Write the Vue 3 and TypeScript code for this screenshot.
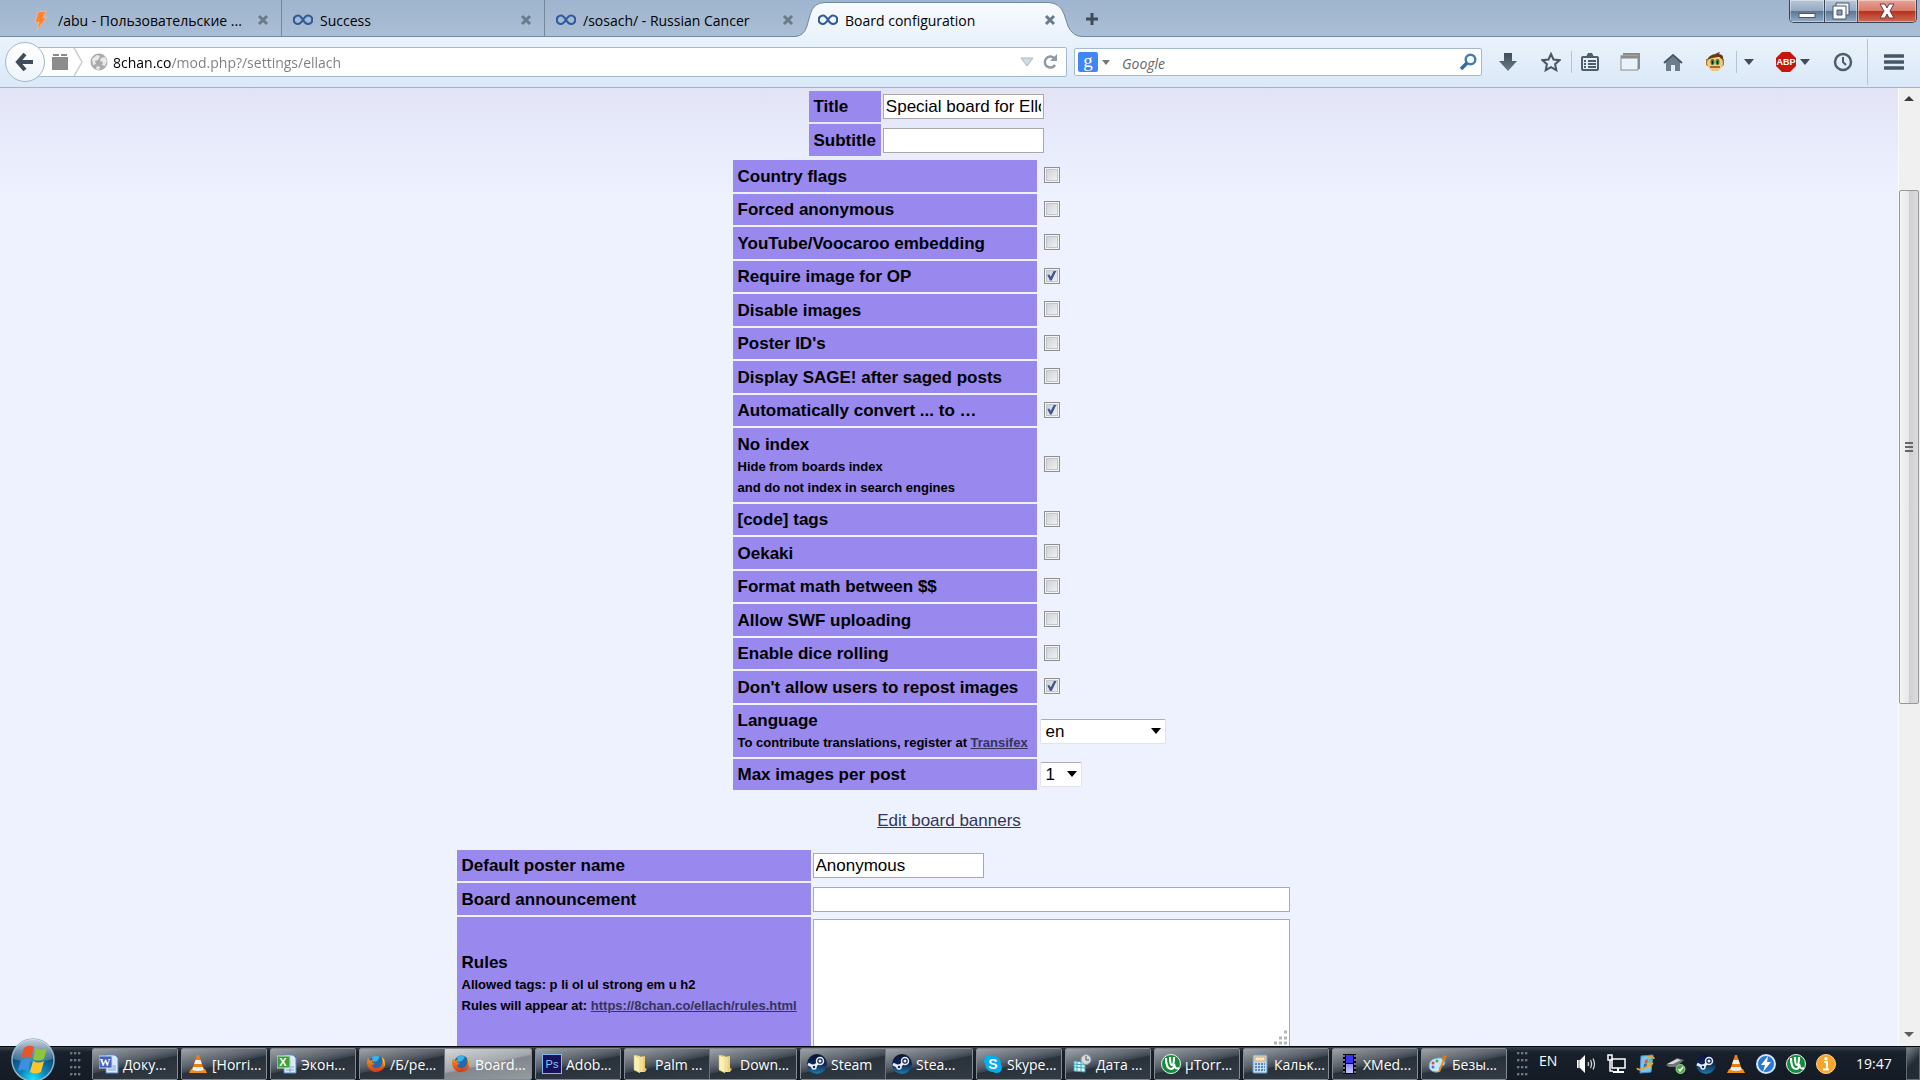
<script setup lang="ts">
import { ref } from 'vue'

interface Tab { title: string; icon: string; kind: string }
interface Option { label: string; checked: boolean; notes?: string[] }
interface Task { label: string; icon: string; active?: boolean }
interface Glyph { text: string; x: number; y: number; size: number; weight: number; family: string; fill: string }

const tabs: Tab[] = [
  { title: '/abu - Пользовательские ...', icon: 'bolt', kind: 'first' },
  { title: 'Success', icon: 'infinity', kind: 'second' },
  { title: '/sosach/ - Russian Cancer', icon: 'infinity', kind: 'third' },
  { title: 'Board configuration', icon: 'infinity', kind: 'active' },
]

const url = ref('8chan.co/mod.php?/settings/ellach')
const title = ref('Special board for Ellochka')
const subtitle = ref('')
const posterName = ref('Anonymous')
const announcement = ref('')
const rules = ref('')
const language = ref('en')
const maxImages = ref('1')

const options = ref<Option[]>([
  { label: 'Country flags', checked: false },
  { label: 'Forced anonymous', checked: false },
  { label: 'YouTube/Voocaroo embedding', checked: false },
  { label: 'Require image for OP', checked: true },
  { label: 'Disable images', checked: false },
  { label: "Poster ID's", checked: false },
  { label: 'Display SAGE! after saged posts', checked: false },
  { label: 'Automatically convert ... to …', checked: true },
  { label: 'No index', checked: false, notes: ['Hide from boards index', 'and do not index in search engines'] },
  { label: '[code] tags', checked: false },
  { label: 'Oekaki', checked: false },
  { label: 'Format math between $$', checked: false },
  { label: 'Allow SWF uploading', checked: false },
  { label: 'Enable dice rolling', checked: false },
  { label: "Don't allow users to repost images", checked: true },
])

const taskGroups: Task[][] = [
  [{ label: 'Доку...', icon: 'word' }],
  [{ label: '[Horri...', icon: 'vlc' }],
  [{ label: 'Экон...', icon: 'excel' }],
  [{ label: '/Б/ре...', icon: 'firefox' }, { label: 'Board...', icon: 'firefox', active: true }],
  [{ label: 'Adob...', icon: 'ps' }],
  [{ label: 'Palm ...', icon: 'folder' }, { label: 'Down...', icon: 'folder' }],
  [{ label: 'Steam', icon: 'steam' }, { label: 'Stea...', icon: 'steam' }],
  [{ label: 'Skype...', icon: 'skype' }],
  [{ label: 'Дата ...', icon: 'date' }],
  [{ label: 'µTorr...', icon: 'utorrent' }],
  [{ label: 'Кальк...', icon: 'calc' }],
  [{ label: 'XMed...', icon: 'film' }],
  [{ label: 'Безы...', icon: 'paint' }],
]

// Letters that sit on top of an application icon.
const glyphs: Record<string, Glyph> = {
  word: { text: 'W', x: 6, y: 12, size: 11, weight: 700, family: 'Liberation Serif', fill: '#fff' },
  excel: { text: 'X', x: 6, y: 12, size: 11, weight: 700, family: 'Liberation Sans', fill: '#fff' },
  ps: { text: 'Ps', x: 10, y: 14, size: 11, weight: 400, family: 'Liberation Sans', fill: '#8cc7ff' },
  skype: { text: 'S', x: 10, y: 15, size: 14, weight: 700, family: 'Liberation Sans', fill: '#fff' },
}

const tray = ['speaker', 'network', 'update', 'usb', 'steam', 'vlc', 'daemon', 'utorrent', 'info']
</script>

<template>
  <div class="desktop">
    <svg class="sprites" aria-hidden="true">
      <defs>
        <radialGradient id="g-orb" cx="50%" cy="95%" r="90%">
          <stop offset="0" stop-color="#1fe0ff" /><stop offset=".35" stop-color="#0b86b8" /><stop offset=".8" stop-color="#0b3f6b" /><stop offset="1" stop-color="#1b4a70" />
        </radialGradient>
        <linearGradient id="g-gloss" x2="0" y2="1"><stop offset="0" stop-color="#fff" stop-opacity=".75" /><stop offset="1" stop-color="#fff" stop-opacity=".15" /></linearGradient>
        <linearGradient id="g-tab" x2="0" y2="1"><stop offset="0" stop-color="#f8fbff" /><stop offset="1" stop-color="#eaf2fa" /></linearGradient>
        <linearGradient id="g-steam" x2="0" y2="1"><stop offset="0" stop-color="#0a1438" /><stop offset=".5" stop-color="#0f2552" /><stop offset="1" stop-color="#1b7fae" /></linearGradient>
        <linearGradient id="g-folder" x2="1"><stop offset="0" stop-color="#fdf3b4" /><stop offset="1" stop-color="#dfb94e" /></linearGradient>
        <linearGradient id="g-film" x2="0" y2="1"><stop offset="0" stop-color="#8f8bff" /><stop offset="1" stop-color="#c9c6ff" /></linearGradient>
        <linearGradient id="g-dark" x2="0" y2="1"><stop offset="0" stop-color="#3f4c5a" /><stop offset="1" stop-color="#6d7a88" /></linearGradient>
        <linearGradient id="g-flame" x2="0" y2="1"><stop offset="0" stop-color="#f5a11c" /><stop offset="1" stop-color="#d6361a" /></linearGradient>
      </defs>
      <symbol id="bolt" viewBox="0 0 20 20"><path d="M7 2l8-1-3 7 4-1L6 20l2-8-4 1z" fill="#ff8331" stroke="#fbc79e" stroke-width=".6" /></symbol>
      <symbol id="infinity" viewBox="0 0 20 20"><path d="M10 10C8 6.500 6.500 5.500 5 5.500a4 4 0 0 0 0 8.500c1.500 0 3-1 5-4.300s3.500-4.200 5-4.200a4 4 0 0 1 0 8.500c-1.500 0-3-.9-5-4z" fill="none" stroke="#2f5b9c" stroke-width="2.200" /></symbol>
      <symbol id="close" viewBox="0 0 12 12"><path d="M2 2l8 8M10 2l-8 8" stroke="#6b7a8a" stroke-width="3" /></symbol>
      <symbol id="word" viewBox="0 0 20 20"><path d="M7 1h9l3 3v15H7z" fill="#dce9fb" stroke="#5d86c8" /><path d="M9 12h8M9 14h8M9 16h8" stroke="#7f9fd6" /><rect y="2" width="13" height="12" fill="#3f62bd" stroke="#c6d6f5" /></symbol>
      <symbol id="excel" viewBox="0 0 20 20"><path d="M7 1h9l3 3v15H7z" fill="#dce9fb" stroke="#5d86c8" /><path d="M9 13h8M9 16h8M13 6v12" stroke="#7f9fd6" /><rect y="2" width="13" height="12" fill="#3aa043" stroke="#c5eab9" /></symbol>
      <symbol id="vlc" viewBox="0 0 20 20"><path d="M3 15h14l2 4H1z" fill="#f58a0b" /><path d="M9 1h2l5 15q-6 3-12 0z" fill="#f07d0a" /><path d="M7.400 6h5.200l1.200 4H6.200zM5 13h10l.8 3q-5.800 2-11.600 0z" fill="#eef0f2" /></symbol>
      <symbol id="firefox" viewBox="0 0 20 20"><circle cx="10.500" cy="9" r="7.500" fill="#2269b0" /><path d="M6 3q4-3 8 0l-3 4-4 1z" fill="#39b4e8" /><path d="M2 4q-2 5 0 9 3 6 9 5 8-1 8-9 0-4-3-6 2 9-4 11-5 1-6-3l3-1-3-2 1-2q-3 0-3 1z" fill="url(#g-flame)" /><path d="M16 3q4 5 2 10 0-5-2-10" fill="#ffd21c" /></symbol>
      <symbol id="ps" viewBox="0 0 20 20"><rect x=".5" y=".5" width="19" height="19" fill="#16135c" stroke="#7eb8f5" /></symbol>
      <symbol id="folder" viewBox="0 0 20 20"><path d="M4 1l5 1v16l-5-3z" fill="#f3df8c" /><path d="M8 3l6-1v12l2 1-2 3H9z" fill="url(#g-folder)" /><path d="M3 1l6 3v15l-6-3z" fill="#fbf0b4" stroke="#d9bc62" stroke-width=".5" /></symbol>
      <symbol id="steam" viewBox="0 0 20 20"><circle cx="10" cy="10" r="10" fill="url(#g-steam)" /><path d="M1 10l6 3 6-6" stroke="#e8eef5" stroke-width="3" fill="none" /><circle cx="13" cy="7" r="3.500" fill="#14274d" stroke="#e8eef5" stroke-width="1.500" /><circle cx="13" cy="7" r="1.500" fill="#e8eef5" /><circle cx="7" cy="13" r="2" fill="#14274d" stroke="#e8eef5" stroke-width="1.500" /></symbol>
      <symbol id="skype" viewBox="0 0 20 20"><circle cx="6.500" cy="6.500" r="5.500" fill="#00aff0" /><circle cx="13.500" cy="13.500" r="5.500" fill="#00aff0" /><circle cx="10" cy="10" r="8" fill="#00aff0" /></symbol>
      <symbol id="date" viewBox="0 0 20 20"><path d="M2 7l11 1v10L2 17z" fill="#dff7fb" stroke="#35a6c2" /><path d="M2 10l11 1M2 13l11 1M5 8v9M9 8v9" stroke="#35a6c2" /><circle cx="14" cy="5.500" r="5" fill="#d4dade" stroke="#8d979f" /><path d="M14 2v4h3" fill="none" stroke="#4c565e" /></symbol>
      <symbol id="utorrent" viewBox="0 0 20 20"><circle cx="10" cy="10" r="9.500" fill="#168a3b" stroke="#e9f5ea" /><path d="M5 4q0 11 5 11 3 0 3-4M9 3q0 8 2 8t2-8M13 10q1 6 5 4" fill="none" stroke="#fff" stroke-width="2.200" /></symbol>
      <symbol id="calc" viewBox="0 0 20 20"><rect x="3" y="1" width="14" height="18" rx="1" fill="#c5dbef" stroke="#6b9ac4" /><rect x="5" y="3" width="10" height="4" fill="#f7ead0" stroke="#e7a84e" /><path d="M5 10h10M5 13h10M5 16h10" stroke="#5a89b8" stroke-width="2" stroke-dasharray="2 1" /></symbol>
      <symbol id="film" viewBox="0 0 20 20"><rect x="4" width="13" height="20" fill="#090909" /><path d="M5 1v18M16 1v18" stroke="#ddd" stroke-width="1" stroke-dasharray="2 2" /><rect x="7" y="1" width="7" height="8" fill="#3c32f5" /><rect x="7" y="10" width="7" height="9" fill="url(#g-film)" /></symbol>
      <symbol id="paint" viewBox="0 0 20 20"><path d="M1 12q0-7 8-8 8-1 8 5 0 3-4 3-2 1-1 4-1 3-5 2-6-1-6-6z" fill="#c9e6f5" stroke="#5fa3c8" /><circle cx="5" cy="9" r="1.500" fill="#df4c3b" /><circle cx="9" cy="7" r="1.500" fill="#4dae4d" /><circle cx="5" cy="13" r="1.500" fill="#4277d3" /><path d="M17 3l-6 15" stroke="#e58a1d" stroke-width="2" /><path d="M15 1l4 1-2 5-3-1z" fill="#cc7a2b" /></symbol>
      <symbol id="speaker" viewBox="0 0 20 20"><path d="M1 6h3l5-5v18l-5-5H1z" fill="#fff" /><path d="M3 6v8" stroke="#777" /><path d="M12 8q1 2 0 4M14.500 6q2 4 0 8M17 4.500q3 5.500 0 11" fill="none" stroke="#cfd4d8" stroke-width="1.300" /></symbol>
      <symbol id="network" viewBox="0 0 20 20"><path d="M6 5h13v9H6z" fill="#101820" stroke="#fff" stroke-width="1.500" /><path d="M12 14v3M7 18h11" stroke="#fff" stroke-width="2" /><path d="M2 1h4v5H2zM4 6v11h3" fill="none" stroke="#fff" stroke-width="1.500" /></symbol>
      <symbol id="update" viewBox="0 0 20 20"><path d="M5 2l12-1-2 17-11 1z" fill="#7cc4ee" stroke="#4b93c8" /><path d="M9 6l3-1-.5 4-3 .5z" fill="#e65a32" /><path d="M13 5l3-.5-.5 4-3 .5z" fill="#7dbb42" /><path d="M8 10l3-.5-.5 4-3 .5z" fill="#3473bd" /><path d="M12 10l3-.5-.5 4-3 .5z" fill="#f2bd2d" /><path d="M1 14q2 5 16-5M18 5q0-3-6-2" fill="none" stroke="#efa42d" stroke-width="1.800" /></symbol>
      <symbol id="usb" viewBox="0 0 20 20"><path d="M0 11l11-7 7 2-8 7-7 0z" fill="#6f7476" /><path d="M1 10l10-5 4 1-8 4z" fill="#d6d9da" /><circle cx="14.500" cy="15" r="4.500" fill="#48a93e" stroke="#dff0da" stroke-width=".7" /><path d="M12.500 15l1.500 2 3-4" fill="none" stroke="#fff" stroke-width="1.500" /></symbol>
      <symbol id="daemon" viewBox="0 0 20 20"><circle cx="10" cy="10" r="9" fill="#2a77d4" stroke="#cfe4fa" stroke-width="2" /><path d="M12 2L5 11h4l-2 7 8-10h-4z" fill="#fff" /></symbol>
      <symbol id="info" viewBox="0 0 20 20"><circle cx="10" cy="10" r="9.500" fill="#f9a42a" stroke="#ffd491" /><path d="M8 8h3v7M7 15.500h6" stroke="#fff" stroke-width="2" fill="none" /><circle cx="10" cy="4.800" r="1.700" fill="#fff" /></symbol>
    </svg>

    <header class="tabstrip">
      <div v-for="tab in tabs" :key="tab.title" class="tab" :class="tab.kind">
        <svg v-if="tab.kind === 'active'" class="tab-shape" viewBox="0 0 292 38">
          <path d="M0 36.500Q9 36 12 26L15 15Q18 2.500 30 2.500H254Q265 3 269 14L273 26Q277 36 287 36.500H292V38H0z" fill="url(#g-tab)" />
          <path d="M0 36.500Q9 36 12 26L15 15Q18 2.500 30 2.500H254Q265 3 269 14L273 26Q277 36 287 36.500H292" fill="none" stroke="#6f88a3" />
        </svg>
        <svg class="icon"><use :href="'#' + tab.icon" /></svg>
        <a class="tab-title" href="#">{{ tab.title }}</a>
        <button class="tab-close" aria-label="Close tab"><svg width="12" height="12"><use href="#close" /></svg></button>
      </div>
      <button class="new-tab" aria-label="New tab"><svg width="14" height="14"><path d="M7 1v12M1 7h12" stroke="#3f4d5b" stroke-width="3" /></svg></button>
      <div class="window-buttons">
        <button class="win min" aria-label="Minimize"><svg width="18" height="18"><rect x="1" y="11.500" width="16" height="4" fill="#fff" stroke="#47566a" /></svg></button>
        <button class="win max" aria-label="Restore"><svg width="18" height="18"><path d="M4 1h13v12H4z" fill="#eef2f6" stroke="#47566a" /><path d="M1 4h13v13H1z" fill="#fff" stroke="#47566a" /><path d="M5 8h5v5H5z" fill="#8ba0b8" stroke="#47566a" /></svg></button>
        <button class="win quit" aria-label="Close"><svg width="18" height="16"><path d="M2 1h5l2 4 2-4h5l-4 7 4 7h-5l-2-4-2 4H2l4-7z" fill="#fff" stroke="#6a3c44" /></svg></button>
      </div>
    </header>

    <nav class="toolbar">
      <button class="back" aria-label="Back"><svg width="20" height="20"><path d="M10 2L3 10l7 8M3 10h15" fill="none" stroke="#3f4c5a" stroke-width="4" /></svg></button>
      <div class="urlbar">
        <svg width="18" height="18"><path d="M1 4h16v13H1zM2 1h6v2H2zM10 1h6v2h-6z" fill="#8c8c8c" /></svg>
        <svg class="chevron" width="12" height="28"><path d="M2 0l8 14-8 14" fill="none" stroke="#c8ccd0" stroke-width="1.500" /></svg>
        <svg width="18" height="18"><circle cx="9" cy="9" r="8.500" fill="#a9abad" /><path d="M2 6l5-4 3 1-2 4-3 1 1 3-3 1zM11 5l4-1 2 4-2 5-3-1 1-3-3-1zM7 13l3 1-1 3-3-1z" fill="#e8e9ea" /></svg>
        <input v-model="url" class="url" type="text" aria-label="Address" />
        <svg class="drop" width="14" height="10"><path d="M1 1h12L7 9z" fill="#d3dbe2" stroke="#aab6c1" /></svg>
        <svg width="16" height="16"><path d="M12 4a5.500 5.500 0 1 0 1 7" fill="none" stroke="#8e9aa6" stroke-width="2.500" /><path d="M15 0v7H8z" fill="#8e9aa6" /></svg>
      </div>
      <div class="searchbar">
        <svg width="20" height="20"><rect width="20" height="20" rx="2" fill="#4285f4" /><text x="10" y="15" font-size="19" fill="#fff" text-anchor="middle" font-family="Liberation Serif">g</text></svg>
        <svg class="engine" width="8" height="5"><path d="M0 0h8L4 5z" fill="#777" /></svg>
        <input class="query" type="text" placeholder="Google" aria-label="Search" />
        <svg width="18" height="18"><circle cx="11.500" cy="6.500" r="4.800" fill="none" stroke="#3f7fb5" stroke-width="2.500" /><path d="M8 10l-6 6" stroke="#2f6ca8" stroke-width="3.500" /></svg>
      </div>
      <div class="tools">
        <button class="tool download" aria-label="Downloads"><svg width="18" height="18"><path d="M5 0h8v8h5l-9 10L0 8h5z" fill="url(#g-dark)" /></svg></button>
        <button class="tool star" aria-label="Bookmark"><svg width="20" height="20"><path d="M10 2l2.500 5.500 6 .7-4.400 4 1.200 6L10 15.200l-5.300 3 1.200-6-4.400-4 6-.7z" fill="none" stroke="#485664" stroke-width="2" /></svg></button>
        <button class="tool list ruled" aria-label="Bookmarks"><svg width="18" height="18"><rect x="1" y="4" width="16" height="13" rx="1" fill="none" stroke="#4f5d6b" stroke-width="2" /><path d="M5 4l2-4h4l2 4z" fill="#4f5d6b" /><path d="M3 8h2M7 8h8M3 11h2M7 11h8M3 14h2M7 14h8" stroke="#4f5d6b" stroke-width="2" /></svg></button>
        <button class="tool pane" aria-label="Window"><svg width="20" height="18"><path d="M3 1h16v15" fill="none" stroke="#8c8c8c" stroke-width="2" /><rect x="1" y="3" width="17" height="14" fill="#eaf2fa" stroke="#8c8c8c" /><path d="M1 4h17" stroke="#8c8c8c" stroke-width="3" /></svg></button>
        <button class="tool home" aria-label="Home"><svg width="20" height="18"><path d="M10 3l7 6v9h-5v-6H8v6H3V9z" fill="#6f7d8b" /><path d="M1 10l9-8 9 8" fill="none" stroke="#485664" stroke-width="2" /></svg></button>
        <button class="tool monkey" aria-label="Greasemonkey"><svg width="20" height="20"><path d="M1 7h18v6l-3 2q-2 4-6 4t-6-4l-3-2z" fill="#b87427" /><path d="M3 6h14l1 6-2 4q-2 3-6 3t-6-3l-2-4z" fill="#f7c877" /><path d="M2 8q2-5 8-6 4-2 5-2l-1 2 3 1q2 2 1 5l-4-3-7 1z" fill="#6a3a14" /><ellipse cx="7.500" cy="10" rx="2" ry="3" fill="#2f7a43" /><ellipse cx="12.500" cy="10" rx="2" ry="3" fill="#2f7a43" /><path d="M7.500 9v3M12.500 9v3" stroke="#10281a" /><path d="M5 15h10" fill="none" stroke="#a3402a" stroke-width="1.500" /></svg></button>
        <button class="tool scripts ruled" aria-label="Scripts"><svg width="10" height="6"><path d="M0 0h10L5 6z" fill="#3f4c5a" /></svg></button>
        <button class="tool adblock" aria-label="Adblock"><svg width="20" height="20"><path d="M6 0h8l6 6v8l-6 6H6l-6-6V6z" fill="#c8160c" /><text x="10" y="13" font-size="9" font-weight="700" fill="#fff" text-anchor="middle" font-family="Liberation Sans Narrow, Liberation Sans">ABP</text></svg></button>
        <button class="tool caret" aria-label="Adblock menu"><svg width="10" height="6"><path d="M0 0h10L5 6z" fill="#3f4c5a" /></svg></button>
        <button class="tool history" aria-label="History"><svg width="20" height="20"><circle cx="10" cy="10" r="8" fill="none" stroke="#4f5d6b" stroke-width="2.500" /><path d="M10 5v5l3 3" fill="none" stroke="#4f5d6b" stroke-width="2" /></svg></button>
        <button class="tool menu" aria-label="Menu"><svg width="20" height="18"><path d="M1 3h18M1 9h18M1 15h18" stroke="#485664" stroke-width="3.500" stroke-linecap="round" /></svg></button>
      </div>
    </nav>

    <main class="viewport">
      <form class="page" @submit.prevent>
        <table class="settings titles">
          <tbody>
            <tr><th><label for="title">Title</label></th><td><input id="title" v-model="title" class="field short" type="text" /></td></tr>
            <tr><th><label for="subtitle">Subtitle</label></th><td><input id="subtitle" v-model="subtitle" class="field short" type="text" /></td></tr>
          </tbody>
        </table>
        <table class="settings flags">
          <tbody>
            <tr v-for="(option, i) in options" :key="option.label">
              <th>
                <label :for="'opt' + i">{{ option.label }}</label>
                <small v-for="note in option.notes" :key="note">{{ note }}</small>
              </th>
              <td><input :id="'opt' + i" v-model="option.checked" class="check" type="checkbox" /></td>
            </tr>
            <tr>
              <th><label for="lang">Language</label><small>To contribute translations, register at <a href="#">Transifex</a></small></th>
              <td>
                <span class="picker wide"><select id="lang" v-model="language"><option>en</option></select><svg width="10" height="6"><path d="M0 0h10L5 6z" /></svg></span>
              </td>
            </tr>
            <tr>
              <th><label for="max">Max images per post</label></th>
              <td>
                <span class="picker"><select id="max" v-model="maxImages"><option>1</option><option>2</option><option>3</option></select><svg width="10" height="6"><path d="M0 0h10L5 6z" /></svg></span>
              </td>
            </tr>
          </tbody>
        </table>
        <p class="banners"><a href="#">Edit board banners</a></p>
        <table class="settings texts">
          <tbody>
            <tr><th><label for="poster">Default poster name</label></th><td><input id="poster" v-model="posterName" class="field medium" type="text" /></td></tr>
            <tr><th><label for="announce">Board announcement</label></th><td><input id="announce" v-model="announcement" class="field long" type="text" /></td></tr>
            <tr>
              <th>
                <label for="rules">Rules</label>
                <small>Allowed tags: p li ol ul strong em u h2</small>
                <small>Rules will appear at: <a href="#">https://8chan.co/ellach/rules.html</a></small>
              </th>
              <td>
                <span class="area"><textarea id="rules" v-model="rules"></textarea><svg width="16" height="16"><path d="M12 2h3M7 8h3M12 8h3M2 13h3M7 13h3M12 13h3" stroke="#b5b5b5" stroke-width="3" /></svg></span>
              </td>
            </tr>
          </tbody>
        </table>
      </form>
      <div class="scrollbar" aria-hidden="true">
        <svg width="10" height="6"><path d="M0 5h10L5 0z" fill="#3c3c3c" /></svg>
        <div class="track"><div class="thumb"><svg width="8" height="10"><path d="M0 1h8M0 5h8M0 9h8" stroke="#666" stroke-width="2" /></svg></div></div>
        <svg width="10" height="6"><path d="M0 0h10L5 5z" fill="#5c5c5c" /></svg>
      </div>
    </main>

    <footer class="taskbar">
      <button class="start" aria-label="Start">
        <svg width="44" height="44">
          <circle cx="22" cy="22" r="21" fill="url(#g-orb)" stroke="#8fb3ca" stroke-width="1.500" />
          <path d="M2 21A20 20 0 0 1 42 21Q22 27 2 21z" fill="url(#g-gloss)" />
          <path d="M13 10q5-4 10-1l-3 11q-5-3-10 0z" fill="#e6562a" /><path d="M25 10q5 3 11 0l-3 11q-6 3-11 0z" fill="#8cc63c" />
          <path d="M10 22q5-3 10 0l-3 11q-5-3-10 0z" fill="#3f8fe0" /><path d="M22 23q5 3 11 0l-3 11q-6 3-11 0z" fill="#fdc52c" />
        </svg>
      </button>
      <span class="grip"></span>
      <div class="tasks">
        <div v-for="(group, g) in taskGroups" :key="g" class="group">
          <button v-for="task in group" :key="task.label" class="task" :class="{ active: task.active }">
            <svg class="icon">
              <use :href="'#' + task.icon" />
              <text
                v-if="glyphs[task.icon]" :x="glyphs[task.icon].x" :y="glyphs[task.icon].y" :font-size="glyphs[task.icon].size"
                :font-weight="glyphs[task.icon].weight" :font-family="glyphs[task.icon].family" :fill="glyphs[task.icon].fill" text-anchor="middle"
              >{{ glyphs[task.icon].text }}</text>
            </svg>
            <span>{{ task.label }}</span>
          </button>
        </div>
      </div>
      <div class="tray">
        <span class="grip"></span>
        <span class="lang">EN</span>
        <svg v-for="name in tray" :key="name" class="icon"><use :href="'#' + name" /></svg>
        <time class="clock">19:47</time>
        <button class="show-desktop" aria-label="Show desktop"></button>
      </div>
    </footer>
  </div>
</template>

<style>
body { margin: 0; overflow: hidden; }
</style>

<style scoped>
.desktop { height: 100vh; display: flex; flex-direction: column; font-family: "Open Sans", "Noto Sans", sans-serif; font-size: 14px; color: #000; }
.desktop * { box-sizing: border-box; }
.sprites { position: absolute; width: 0; height: 0; }
svg { display: block; flex: none; }
button { border: 0; padding: 0; background: none; font: inherit; color: inherit; }
.icon { width: 20px; height: 20px; }

.tabstrip { position: relative; z-index: 1; flex: none; height: 37px; display: flex; align-items: center; background: linear-gradient(#9fb4ce, #aabed4); border-bottom: 1px solid #6f88a3; }
.tab { position: relative; display: flex; align-items: center; gap: 7px; height: 36px; padding: 4px 12px 0 11px; }
.tab .icon, .tab-title, .tab-close { position: relative; }
.tab-title { flex: 1; padding-top: 2px; color: #000; text-decoration: none; white-space: nowrap; line-height: 20px; }
.tab.first { width: 282px; padding-left: 31px; border-right: 1px solid #75879b; }
.tab.second { width: 263px; border-right: 1px solid #75879b; }
.tab.third { width: 250px; padding-right: 1px; }
.tab.active { width: 290px; padding-left: 23px; padding-right: 29px; }
.tab-shape { position: absolute; left: 0; top: 0; width: 292px; height: 38px; }
.new-tab { margin-top: 2px; }
.window-buttons { display: flex; align-self: flex-start; margin-left: auto; margin-right: 3px; border: 1px solid #38465a; border-top: 0; border-radius: 0 0 5px 5px; overflow: hidden; }
.win { display: flex; align-items: center; justify-content: center; height: 22px; background: linear-gradient(#b9c8d8, #94a9c1 48%, #5d7793 52%, #93adc8); box-shadow: inset 0 0 0 1px rgba(255, 255, 255, .4); }
.min { width: 34px; }
.max { width: 33px; border-left: 1px solid #38465a; }
.quit { width: 59px; border-left: 1px solid #38465a; background: linear-gradient(#e8a497, #d9796a 48%, #b8321d 52%, #cf6b55); }

.toolbar { flex: none; height: 51px; display: flex; align-items: center; padding-left: 5px; background: linear-gradient(#eaf3fa, #dae8f8); border-bottom: 1px solid #9fb6cf; }
.back { position: relative; z-index: 1; width: 40px; height: 40px; display: flex; align-items: center; justify-content: center; border: 1px solid #a3b6ca; border-radius: 50%; background: linear-gradient(#fff, #eef4fb); }
.urlbar { flex: 1; display: flex; align-items: center; height: 30px; margin-left: -8px; padding: 0 8px 0 13px; background: #fff; border: 1px solid #a5b9cd; border-radius: 2px; }
.chevron { margin: 0 6px 0 3px; }
.url { flex: 1; min-width: 0; margin-left: 5px; padding: 2px 0 0; border: 0; outline: 0; font: inherit; line-height: 24px; background: linear-gradient(90deg, #000 58px, #7c7c7c 58px); background-clip: text; color: transparent; }
.drop { margin-right: 8px; }
.searchbar { width: 408px; margin-left: 7px; height: 28px; display: flex; align-items: center; padding: 0 4px 0 3px; background: #fff; border: 1px solid #a5b9cd; border-radius: 2px; }
.engine { margin: 0 12px 0 4px; }
.query { flex: 1; min-width: 0; padding: 2px 0 0; border: 0; outline: 0; background: none; font: inherit; font-style: italic; }
.query::placeholder { color: #666; opacity: 1; }
.tools { display: flex; align-items: center; margin-left: 4px; }
.tool { display: flex; align-items: center; justify-content: center; height: 22px; }
.download { width: 44px; }
.star { width: 41px; }
.list { width: 36px; }
.pane { width: 46px; }
.home { width: 40px; }
.monkey { width: 43px; }
.scripts { width: 24px; }
.adblock { width: 52px; }
.caret { width: 14px; margin-left: -14px; }
.history { width: 55px; padding-left: 6px; }
.ruled { border-left: 1px solid #b3c4d6; }
.menu { width: 53px; height: 46px; border-left: 1px solid #b3c4d6; }

.viewport { flex: 1; min-height: 0; display: flex; background: linear-gradient(#e2e4f6, #eef2ff 110px); }
.page { flex: 1; overflow: hidden; padding-top: 1px; font-family: "Liberation Sans", Arial, sans-serif; font-size: 17px; line-height: 23px; }
.settings { margin: 0 auto; border-spacing: 2px; }
.settings th { padding: 0 5px; background: #9988ee; text-align: left; font-size: 17px; line-height: 23px; }
.settings td { padding: 0; }
.settings tr { height: 31px; }
.settings label, .settings small { display: block; }
.settings small { font-size: 13px; line-height: 21px; white-space: nowrap; }
.settings a, .banners a { color: #34345c; }
.titles { width: 285px; }
.titles th { width: 71px; }
.titles tr:last-child { height: 32px; }
.flags { width: 437px; }
.flags th { width: 304px; }
.flags tr:nth-child(odd) { height: 32px; }
.flags tr:nth-child(9) { height: 74px; }
.flags tr:nth-child(16) { height: 52px; }
.flags tr:last-child { height: 31px; }
.texts { width: 989px; }
.texts th { width: 354px; }
.texts tr:nth-child(2) { height: 32px; }
.texts tr:last-child { height: 132px; }
.field { display: block; height: 25px; padding: 0 2px; border: 1px solid #a9a9a9; background: #fff; outline: 0; font: inherit; color: #000; }
.short { width: 161px; }
.medium { width: 171px; }
.long { width: 477px; }
.check { appearance: none; position: relative; display: block; width: 16px; height: 16px; margin: 0 5px 2px; border: 1px solid #8e8f8f; background: linear-gradient(135deg, #c9ccd4, #f6f6f6); box-shadow: inset 0 0 0 1px #f4f4f4, inset 0 0 0 2px #c2c5cd; }
.check:checked::after { content: ""; position: absolute; inset: 2px; background: #3f5796; clip-path: polygon(8% 45%, 28% 40%, 42% 62%, 75% 0, 100% 0, 52% 100%, 35% 100%); }
.picker { position: relative; display: block; width: 42px; height: 25px; margin-left: 1px; }
.wide { width: 126px; }
.picker select { appearance: none; width: 100%; height: 100%; padding: 0 5px; border: 1px solid #e2e3ea; border-top-color: #abadb3; border-radius: 2px; background: #fff; font: inherit; color: #000; }
.picker svg { position: absolute; right: 5px; top: 9px; pointer-events: none; }
.area { position: relative; display: block; width: 477px; }
.area textarea { display: block; width: 100%; height: 128px; resize: none; border: 1px solid #a9a9a9; background: #fff; outline: 0; font: inherit; }
.area svg { position: absolute; right: 2px; bottom: 1px; }
.banners { margin: 17px 0 16px; text-align: center; }

.scrollbar { flex: none; width: 22px; display: flex; flex-direction: column; align-items: center; padding: 8px 1px 8px 0; background: #f0f0f0; border-left: 1px solid #fafafa; }
.track { flex: 1; width: 100%; padding-top: 88px; }
.thumb { display: flex; align-items: center; justify-content: center; height: 61%; border: 1px solid #979797; border-radius: 2px; background: linear-gradient(90deg, #f5f5f5, #e6e6e8 50%, #cfcfd3 52%, #dcdcdf); }

.taskbar { position: relative; flex: none; height: 34px; display: flex; background: linear-gradient(#3a4450, #18202b 5px, #141b25); border-top: 1px solid #05080c; color: #fff; }
.start { position: relative; align-self: flex-end; width: 44px; height: 42px; margin-left: 11px; }
.grip { width: 12px; height: 24px; margin: 5px 0 0 15px; background: radial-gradient(circle at 1px 1px, #6c747d 1px, transparent 2px) 0 0 / 4px 7px; }
.tasks { display: flex; gap: 3px; margin-left: 10px; padding-top: 1px; }
.group { display: flex; height: 32px; border: 1px solid #858b93; border-radius: 2px; overflow: hidden; }
.task { width: 84px; display: flex; align-items: center; gap: 4px; padding-left: 6px; white-space: nowrap; background: linear-gradient(168deg, #a0a4a9, #5b626b 38%, #3b434d 50%, #29313a 52%, #333b44); }
.group .task + .task { width: 87px; border-left: 1px solid #6d747c; }
.task.active { background: linear-gradient(168deg, #d5d7d9, #a2a6ab 48%, #82878e 52%, #969ba0); }
.tray { display: flex; align-items: center; gap: 10px; margin-left: auto; }
.tray .grip { margin: 0; }
.lang { width: 27px; padding-bottom: 6px; }
.clock { width: 50px; padding-left: 10px; }
.show-desktop { width: 14px; height: 33px; border: 1px solid #626a73; background: linear-gradient(135deg, #7b838c, #232b35 50%); }
</style>
